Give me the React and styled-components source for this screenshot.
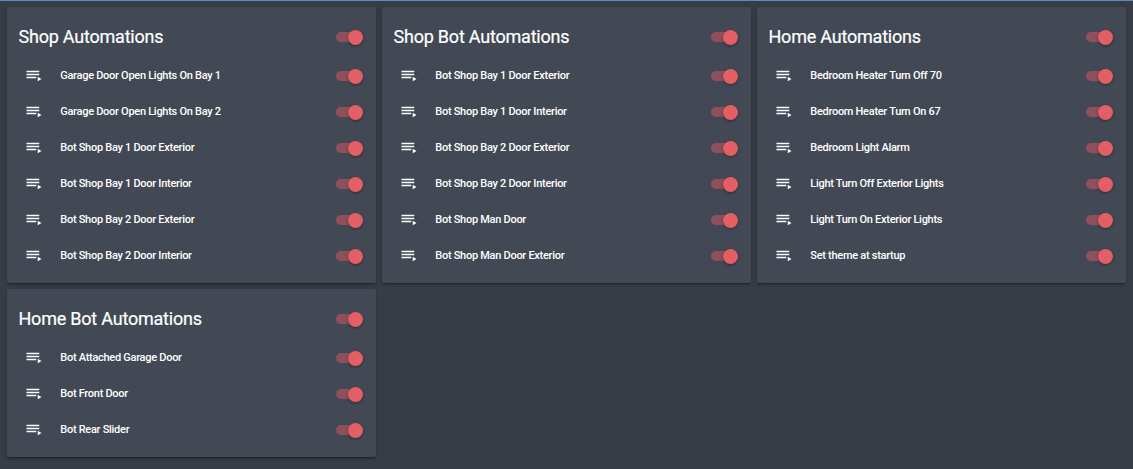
import React from 'react';
import styled, { createGlobalStyle } from 'styled-components';

const GlobalStyle = createGlobalStyle`
  *, *::before, *::after { box-sizing: border-box; }
  body {
    margin: 0;
    background: #383c45;
    font-family: Roboto, "Liberation Sans", sans-serif;
    color: #fff;
  }
`;

const Page = styled.main`
  height: 469px;
  overflow: hidden;
  border-top: 1px solid #5d89c6;
  padding: 6px 7px 0;
`;

const Grid = styled.div`
  display: grid;
  grid-template-columns: repeat(3, 369px);
  align-items: start;
  gap: 6px;
`;

const Card = styled.section`
  background: #434954;
  border-radius: 2px;
  padding: 0 13px 9px 11px;
  box-shadow: 0 2px 2px rgba(0, 0, 0, 0.14), 0 1px 5px rgba(0, 0, 0, 0.12),
    0 3px 1px -2px rgba(0, 0, 0, 0.2);
`;

const Header = styled.header`
  display: flex;
  align-items: center;
  justify-content: space-between;
  height: 51px;
  padding: 9px 0 0;
`;

const Title = styled.h2`
  margin: 0;
  padding: 0 0 1px 0.5px;
  font-size: 18px;
  font-weight: 400;
  line-height: 38px;
  letter-spacing: -0.012em;
  white-space: nowrap;
  -webkit-text-stroke: 0.2px #fff;
`;

const Row = styled.div`
  display: flex;
  align-items: center;
  height: 36px;
`;

const Icon = styled.svg`
  flex: none;
  width: 18px;
  height: 18px;
  margin-left: 7px;
  fill: #fff;
`;

const Name = styled.span`
  flex: 1;
  margin-left: 17.25px;
  font-size: 11px;
  font-weight: 500;
  line-height: 16px;
  letter-spacing: -0.28px;
  white-space: nowrap;
`;

const Track = styled.span`
  display: flex;
  align-items: center;
  justify-content: flex-end;
  flex: none;
  width: 27px;
  height: 10px;
  border-radius: 5px;
  background: linear-gradient(90deg, #8f505b 0 22px, transparent 22px);
`;

const Knob = styled.span`
  flex: none;
  width: 15px;
  height: 15px;
  margin-top: 1px;
  border-radius: 50%;
  background: #e45e65;
  box-shadow: 0 1px 3px rgba(0, 0, 0, 0.4);
`;

const Toggle = () => (
  <Track role="switch" aria-checked="true">
    <Knob />
  </Track>
);

const PlaylistIcon = () => (
  <Icon viewBox="0 0 24 24" aria-hidden="true">
    <path d="M19 9H2v2h17V9M19 5H2v2h17V5M2 15h13v-2H2v2M17 13v6l5-3z" />
  </Icon>
);

const groups = [
  ['Shop Automations', [
    'Garage Door Open Lights On Bay 1',
    'Garage Door Open Lights On Bay 2',
    'Bot Shop Bay 1 Door Exterior',
    'Bot Shop Bay 1 Door Interior',
    'Bot Shop Bay 2 Door Exterior',
    'Bot Shop Bay 2 Door Interior',
  ]],
  ['Shop Bot Automations', [
    'Bot Shop Bay 1 Door Exterior',
    'Bot Shop Bay 1 Door Interior',
    'Bot Shop Bay 2 Door Exterior',
    'Bot Shop Bay 2 Door Interior',
    'Bot Shop Man Door',
    'Bot Shop Man Door Exterior',
  ]],
  ['Home Automations', [
    'Bedroom Heater Turn Off 70',
    'Bedroom Heater Turn On 67',
    'Bedroom Light Alarm',
    'Light Turn Off Exterior Lights',
    'Light Turn On Exterior Lights',
    'Set theme at startup',
  ]],
  ['Home Bot Automations', [
    'Bot Attached Garage Door',
    'Bot Front Door',
    'Bot Rear Slider',
  ]],
];

export default function App() {
  return (
    <>
      <GlobalStyle />
      <Page>
        <Grid>
          {groups.map(([title, items]) => (
            <Card key={title}>
              <Header>
                <Title>{title}</Title>
                <Toggle />
              </Header>
              {items.map((name) => (
                <Row key={name}>
                  <PlaylistIcon />
                  <Name>{name}</Name>
                  <Toggle />
                </Row>
              ))}
            </Card>
          ))}
        </Grid>
      </Page>
    </>
  );
}
